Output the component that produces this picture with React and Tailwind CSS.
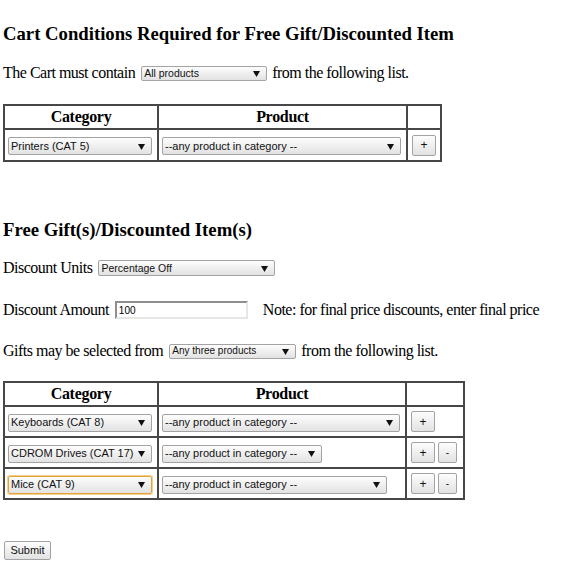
import React from "react";

const serif = { fontFamily: '"Liberation Serif", "Times New Roman", serif' };

function Arrow() {
  return (
    <svg width="7" height="7" viewBox="0 0 7 7" className="shrink-0">
      <polygon points="0,1 7,1 3.5,7" fill="#111" />
    </svg>
  );
}

function Select({ cls, text, focus }) {
  return (
    <span
      className={
        "inline-flex items-center justify-between rounded-[2px] border bg-gradient-to-b from-[#fdfdfd] to-[#e2e2e2] pl-[2px] pr-[6px] font-['Liberation_Sans',Arial,sans-serif] text-[#111] leading-none whitespace-nowrap tracking-normal " +
        (focus ? "border-[#e2a33a] shadow-[0_0_0_1px_#f4d08a] " : "border-[#a3a3a3] ") +
        cls
      }
    >
      <span>{text}</span>
      <Arrow />
    </span>
  );
}

function Btn({ cls, children }) {
  return (
    <span
      className={
        "inline-flex items-center justify-center rounded-[2px] border border-[#a3a3a3] bg-gradient-to-b from-[#fdfdfd] to-[#e2e2e2] font-['Liberation_Sans',Arial,sans-serif] leading-none text-[#111] " +
        cls
      }
    >
      {children}
    </span>
  );
}

function HeaderRow() {
  return (
    <tr className="h-[24px]">
      <th className="border border-[#474747] p-0 text-center text-[16px] leading-[20px] font-bold tracking-[-0.3px]">Category</th>
      <th className="border border-[#474747] p-0 text-center text-[16px] leading-[20px] font-bold tracking-[-0.3px]">Product</th>
      <th className="border border-[#474747] p-0 leading-[20px]"></th>
    </tr>
  );
}

function Row({ cat, prodCls, focus, minus, rowCls }) {
  return (
    <tr className={rowCls}>
      <td className="border border-[#474747] px-[3px] py-0 align-middle leading-[20px]">
        <Select cls="w-[144px] h-[18px] text-[11px]" text={cat} focus={focus} />
      </td>
      <td className="border border-[#474747] px-[3px] py-0 align-middle leading-[20px]">
        <Select cls={prodCls + " h-[18px] text-[11px]"} text="--any product in category --" />
      </td>
      <td className="border border-[#474747] px-[4px] py-0 align-middle leading-[20px]">
        <div className="flex items-center gap-[3px]">
          <Btn cls="w-[24px] h-[21px] text-[12px]">+</Btn>
          {minus && <Btn cls="w-[19px] h-[21px] text-[10px]">-</Btn>}
        </div>
      </td>
    </tr>
  );
}

export default function App() {
  return (
    <div className="min-h-[570px] w-[564px] bg-white pl-[3px] text-black" style={serif}>
      <h3 className="pt-[23px] text-[18.72px] font-bold leading-[22px]">
        Cart Conditions Required for Free Gift/Discounted Item
      </h3>

      <div className="mt-[19px] flex h-[18px] items-center text-[16px] tracking-[-0.5px]">
        <span>The Cart must contain</span>
        <Select cls="ml-[6px] w-[126px] h-[15px] text-[10.5px]" text="All products" />
        <span className="ml-[5px]">from the following list.</span>
      </div>

      <table className="mt-[22px] border-separate border-spacing-0 border border-[#474747] table-fixed w-[439px]">
        <colgroup>
          <col className="w-[154px]" />
          <col className="w-[249px]" />
          <col className="w-[34px]" />
        </colgroup>
        <tbody>
          <HeaderRow />
          <Row cat="Printers (CAT 5)" prodCls="w-[239px]" rowCls="h-[32px]" />
        </tbody>
      </table>

      <h3 className="mt-[57px] text-[18.72px] font-bold leading-[22px]">Free Gift(s)/Discounted Item(s)</h3>

      <div className="mt-[18px] flex h-[18px] items-center text-[16px] tracking-[-0.5px]">
        <span>Discount Units</span>
        <Select cls="ml-[6px] w-[177px] h-[16px] text-[10.5px]" text="Percentage Off" />
      </div>

      <div className="mt-[23px] flex h-[20px] items-center text-[16px] tracking-[-0.5px]">
        <span>Discount Amount</span>
        <span className="ml-[6px] flex h-[18px] w-[133px] items-center border-[2px] border-t-[#8f8f8f] border-l-[#8f8f8f] border-b-[#e6e6e6] border-r-[#e6e6e6] bg-white pl-[2px] font-['Liberation_Sans',Arial,sans-serif] text-[10px] tracking-normal">
          100
        </span>
        <span className="ml-[15px]">Note: for final price discounts, enter final price</span>
      </div>

      <div className="mt-[22px] flex h-[18px] items-center text-[16px] tracking-[-0.5px]">
        <span>Gifts may be selected from</span>
        <Select cls="ml-[6px] w-[127px] h-[15px] text-[10px]" text="Any three products" />
        <span className="ml-[5px]">from the following list.</span>
      </div>

      <table className="mt-[21px] border-separate border-spacing-0 border border-[#474747] table-fixed w-[462px]">
        <colgroup>
          <col className="w-[154px]" />
          <col className="w-[248px]" />
          <col className="w-[58px]" />
        </colgroup>
        <tbody>
          <HeaderRow />
          <Row cat="Keyboards (CAT 8)" prodCls="w-[238px]" rowCls="h-[31px]" />
          <Row cat="CDROM Drives (CAT 17)" prodCls="w-[160px]" minus rowCls="h-[31px]" />
          <Row cat="Mice (CAT 9)" prodCls="w-[225px]" focus minus rowCls="h-[31px]" />
        </tbody>
      </table>

      <div className="mt-[41px] flex pl-[1px]">
        <Btn cls="w-[47px] h-[19px] text-[11px]">Submit</Btn>
      </div>
    </div>
  );
}
